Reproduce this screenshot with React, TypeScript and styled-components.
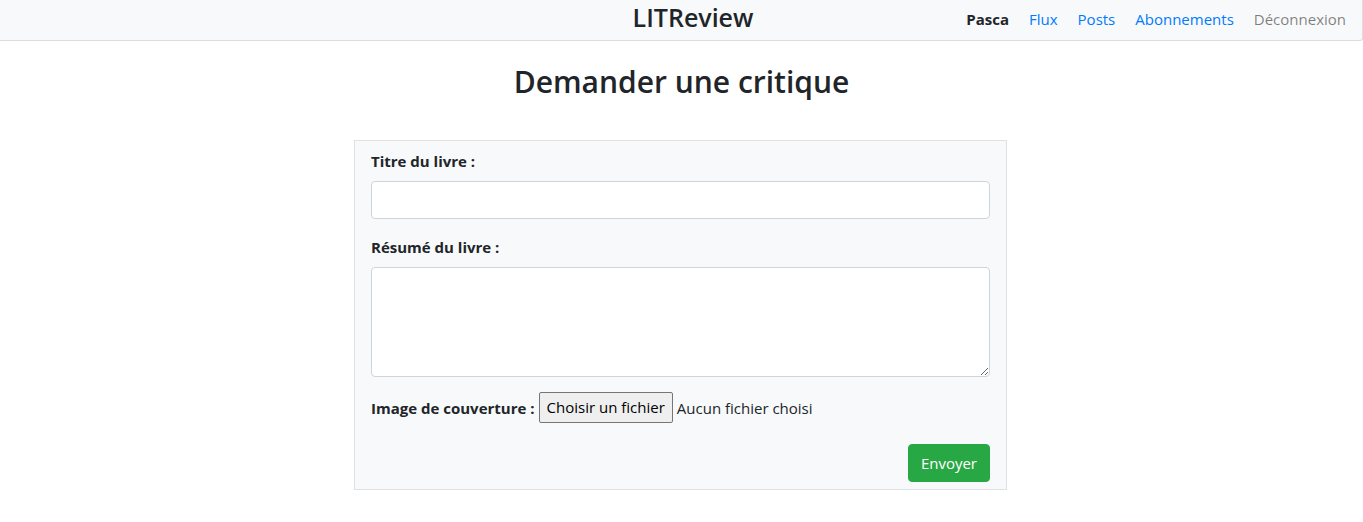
import styled, { createGlobalStyle } from 'styled-components';

const GlobalStyle = createGlobalStyle`
  body {
    margin: 0;
    background: #fff;
    color: #212529;
    font-family: 'Open Sans', 'Noto Sans', sans-serif;
    font-size: 15px;
  }
`;

const Navbar = styled.nav`
  display: grid;
  grid-template-columns: 1fr auto 1fr;
  align-items: center;
  height: 41px;
  box-sizing: border-box;
  padding: 0 6px 2px 16px;
  background: #f8f9fa;
  border: 1px solid #dcdcdc;
  border-top: none;
  border-left: none;
  border-bottom-right-radius: 3px;
`;

const Brand = styled.span`
  grid-column: 2;
  font-size: 25px;
  font-weight: 600;
  color: #212529;
  margin-left: 14px;
  line-height: 1;
  margin-top: -4px;
`;

const NavLinks = styled.ul`
  grid-column: 3;
  justify-self: end;
  display: flex;
  list-style: none;
  margin: 0;
  padding: 0;
`;

const NavItem = styled.li<{ $variant?: 'user' | 'link' | 'muted' }>`
  padding: 0 10px;
  font-size: 15px;
  font-weight: ${(p) => (p.$variant === 'user' ? 700 : 400)};
  color: ${(p) =>
    p.$variant === 'user' ? '#212529' : p.$variant === 'muted' ? 'rgba(0,0,0,0.5)' : '#007bff'};
  cursor: pointer;
`;

const Main = styled.main`
  display: flex;
  flex-direction: column;
  align-items: center;
`;

const Title = styled.h1`
  margin: 23px 0 40px;
  font-size: 30px;
  font-weight: 600;
  line-height: 1.2;
`;

const Card = styled.form`
  width: 653px;
  box-sizing: border-box;
  padding: 10px 16px 7px;
  background: #f8f9fa;
  border: 1px solid #dfe1e3;
  margin-right: 2px;
`;

const Group = styled.div<{ $last?: boolean }>`
  margin-bottom: ${(p) => (p.$last ? 0 : 18)}px;
`;

const Label = styled.label<{ $inline?: boolean }>`
  display: block;
  font-weight: 700;
  margin-bottom: ${(p) => (p.$inline ? 0 : 10)}px;
`;

const Input = styled.input`
  display: block;
  width: 100%;
  height: 38px;
  box-sizing: border-box;
  border: 1px solid #ced4da;
  border-radius: 4px;
  background: #fff;
`;

const TextArea = styled.textarea`
  display: block;
  width: 100%;
  height: 110px;
  box-sizing: border-box;
  border: 1px solid #ced4da;
  border-radius: 4px;
  background: #fff;
`;

const FileRow = styled.div`
  display: flex;
  align-items: center;
  gap: 4px;
  margin-top: 15px;
`;

const FileButton = styled.span`
  display: inline-block;
  padding: 4px 7px 5px;
  border: 1px solid #767676;
  border-radius: 2px;
  background: #efefef;
  color: #000;
`;

const FileName = styled.span`
  color: #212529;
`;

const Actions = styled.div`
  display: flex;
  justify-content: flex-end;
  margin-top: 21px;
`;

const SubmitButton = styled.button`
  height: 38px;
  padding: 0 12px;
  border: 1px solid #28a745;
  border-radius: 4px;
  background: #28a745;
  color: #fff;
  font-family: inherit;
  font-size: 15px;
`;

const App = () => {
  return (
    <>
      <GlobalStyle />
      <Navbar>
        <Brand>LITReview</Brand>
        <NavLinks>
          <NavItem $variant="user">Pasca</NavItem>
          <NavItem>Flux</NavItem>
          <NavItem>Posts</NavItem>
          <NavItem>Abonnements</NavItem>
          <NavItem $variant="muted">Déconnexion</NavItem>
        </NavLinks>
      </Navbar>
      <Main>
        <Title>Demander une critique</Title>
        <Card onSubmit={(e) => e.preventDefault()}>
          <Group>
            <Label>Titre du livre :</Label>
            <Input type="text" />
          </Group>
          <Group $last>
            <Label>Résumé du livre :</Label>
            <TextArea />
          </Group>
          <FileRow>
            <Label as="span" $inline>
              Image de couverture :
            </Label>
            <FileButton>Choisir un fichier</FileButton>
            <FileName>Aucun fichier choisi</FileName>
          </FileRow>
          <Actions>
            <SubmitButton type="submit">Envoyer</SubmitButton>
          </Actions>
        </Card>
      </Main>
    </>
  );
};

export default App;
